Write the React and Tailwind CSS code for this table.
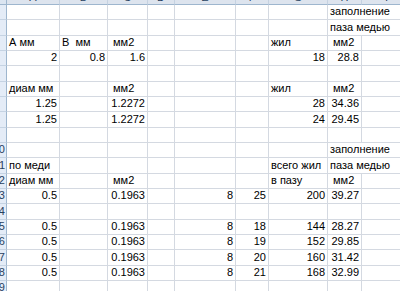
import React from "react";

const letters = ["A", "B", "C", "D", "E", "F", "G", "H", "I"];

// r: [text, align]; H spans into I when "wide"
const sheet = {
  1: { H: ["заполнение", "l"], wide: true },
  2: { H: ["паза медью", "l"], wide: true },
  3: { A: ["А мм", "l"], B: ["В  мм", "l"], C: [" мм2", "l"], G: ["жил", "l"], H: [" мм2", "l"] },
  4: { A: ["2", "r"], B: ["0.8", "r"], C: ["1.6", "r"], G: ["18", "r"], H: ["28.8", "r"] },
  5: {},
  6: { A: ["диам мм", "l"], C: [" мм2", "l"], G: ["жил", "l"], H: [" мм2", "l"] },
  7: { A: ["1.25", "r"], C: ["1.2272", "r"], G: ["28", "r"], H: ["34.36", "r"] },
  8: { A: ["1.25", "r"], C: ["1.2272", "r"], G: ["24", "r"], H: ["29.45", "r"] },
  9: {},
  10: { H: ["заполнение", "l"], wide: true },
  11: { A: ["по меди", "l"], G: ["всего жил", "l"], H: ["паза медью", "l"], wide: true },
  12: { A: ["диам мм", "l"], C: [" мм2", "l"], G: ["в пазу", "l"], H: [" мм2", "l"] },
  13: { A: ["0.5", "r"], C: ["0.1963", "r"], E: ["8", "r"], F: ["25", "r"], G: ["200", "r"], H: ["39.27", "r"] },
  14: {},
  15: { A: ["0.5", "r"], C: ["0.1963", "r"], E: ["8", "r"], F: ["18", "r"], G: ["144", "r"], H: ["28.27", "r"] },
  16: { A: ["0.5", "r"], C: ["0.1963", "r"], E: ["8", "r"], F: ["19", "r"], G: ["152", "r"], H: ["29.85", "r"] },
  17: { A: ["0.5", "r"], C: ["0.1963", "r"], E: ["8", "r"], F: ["20", "r"], G: ["160", "r"], H: ["31.42", "r"] },
  18: { A: ["0.5", "r"], C: ["0.1963", "r"], E: ["8", "r"], F: ["21", "r"], G: ["168", "r"], H: ["32.99", "r"] },
  19: {},
};

function Cell({ data, wide }) {
  const [text, align] = data || ["", "l"];
  return (
    <div
      className={
        "h-[15.33px] border-b border-r border-[#d4d9e1] flex items-end pb-[2px] whitespace-pre overflow-visible leading-[12px] " +
        (align === "r" ? "justify-end pr-[2px] " : "justify-start pl-[2px] ") +
        (wide ? "col-span-2" : "")
      }
    >
      {text}
    </div>
  );
}

export default function App() {
  return (
    <div className="w-[400px] h-[291px] overflow-hidden bg-white text-[11px] text-black font-['Liberation_Sans',Arial,sans-serif]">
      <div className="grid grid-cols-[7px_53px_48px_40px_27px_61px_33px_59px_34px_50px]">
        {/* column headers, scrolled so only the lower edge shows */}
        <div className="h-[5px] bg-[#dbe5f1] border-b border-r border-[#9eb6ce]" />
        {letters.map((l) => (
          <div
            key={l}
            className="h-[5px] bg-[#dde4ee] border-b border-r border-[#9eb6ce] border-r-[#c5d2e1] flex items-end justify-center overflow-hidden text-[#27415f] leading-[12px]"
          >
            <span className="mb-[1px]">{l}</span>
          </div>
        ))}

        {Object.keys(sheet).map((r) => {
          const row = sheet[r];
          const n = Number(r);
          return (
            <React.Fragment key={r}>
              <div className="h-[15.33px] bg-[#e4ecf7] border-b border-r border-[#c5d3e3] border-r-[#9eb6ce] flex items-end justify-end overflow-hidden pb-[2px] text-[#27415f] leading-[12px]">
                {n >= 10 && <span className="whitespace-nowrap mr-[1px]">{r}</span>}
              </div>
              {letters.map((c) => {
                if (row.wide && c === "I") return null;
                return <Cell key={c} data={row[c]} wide={row.wide && c === "H"} />;
              })}
            </React.Fragment>
          );
        })}
      </div>
    </div>
  );
}
